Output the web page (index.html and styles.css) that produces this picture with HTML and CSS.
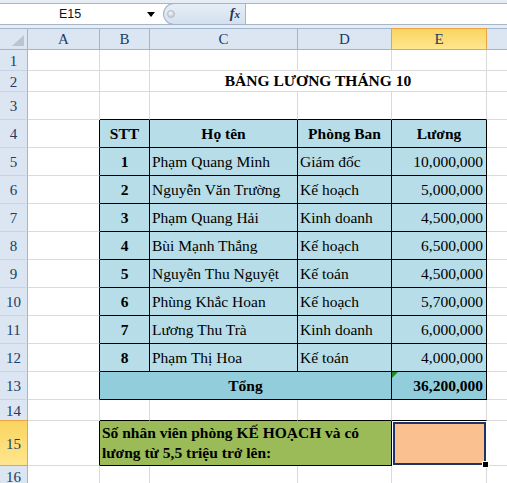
FILE: index.html
```html
<!DOCTYPE html>
<html lang="vi">
<head>
<meta charset="utf-8">
<title>Bảng lương tháng 10</title>
<link rel="stylesheet" href="styles.css">
</head>
<body>
<div class="app">
  <div class="fbar">
    <div class="frow">
      <div class="namebox">E15</div>
      <div class="dd"><span class="tri"></span></div>
      <div class="fxpill"><span class="knob"></span><span class="fx"><i>f</i><i class="fxx">x</i></span></div>
      <div class="finput"></div>
    </div>
  </div>
  <div class="sheet">
    <div class="ch corner"><span class="ctri"></span></div>
    <div class="ch">A</div><div class="ch">B</div><div class="ch">C</div><div class="ch">D</div><div class="ch hsel hcol">E</div><div class="ch"></div>

    <div class="rh">1</div><div class="c"></div><div class="c"></div><div class="c"></div><div class="c"></div><div class="c"></div><div class="c"></div>

    <div class="rh">2</div><div class="c"></div><div class="c"></div><div class="c span3 ctr b">BẢNG LƯƠNG THÁNG 10</div><div class="c"></div>

    <div class="rh">3</div><div class="c"></div><div class="c kb"></div><div class="c kb"></div><div class="c kb"></div><div class="c kb"></div><div class="c"></div>

    <div class="rh">4</div><div class="c kr"></div><div class="c bl ctr b">STT</div><div class="c bl ctr b">Họ tên</div><div class="c bl ctr b">Phòng Ban</div><div class="c bl ctr b">Lương</div><div class="c"></div>

    <div class="rh">5</div><div class="c kr"></div><div class="c bl ctr b">1</div><div class="c bl lt">Phạm Quang Minh</div><div class="c bl lt">Giám đốc</div><div class="c bl rt">10,000,000</div><div class="c"></div>

    <div class="rh">6</div><div class="c kr"></div><div class="c bl ctr b">2</div><div class="c bl lt">Nguyễn Văn Trường</div><div class="c bl lt">Kế hoạch</div><div class="c bl rt">5,000,000</div><div class="c"></div>

    <div class="rh">7</div><div class="c kr"></div><div class="c bl ctr b">3</div><div class="c bl lt">Phạm Quang Hải</div><div class="c bl lt">Kinh doanh</div><div class="c bl rt">4,500,000</div><div class="c"></div>

    <div class="rh">8</div><div class="c kr"></div><div class="c bl ctr b">4</div><div class="c bl lt">Bùi Mạnh Thắng</div><div class="c bl lt">Kế hoạch</div><div class="c bl rt">6,500,000</div><div class="c"></div>

    <div class="rh">9</div><div class="c kr"></div><div class="c bl ctr b">5</div><div class="c bl lt">Nguyễn Thu Nguyệt</div><div class="c bl lt">Kế toán</div><div class="c bl rt">4,500,000</div><div class="c"></div>

    <div class="rh">10</div><div class="c kr"></div><div class="c bl ctr b">6</div><div class="c bl lt">Phùng Khắc Hoan</div><div class="c bl lt">Kế hoạch</div><div class="c bl rt">5,700,000</div><div class="c"></div>

    <div class="rh">11</div><div class="c kr"></div><div class="c bl ctr b">7</div><div class="c bl lt">Lương Thu Trà</div><div class="c bl lt">Kinh doanh</div><div class="c bl rt">6,000,000</div><div class="c"></div>

    <div class="rh">12</div><div class="c kr"></div><div class="c bl ctr b">8</div><div class="c bl lt">Phạm Thị Hoa</div><div class="c bl lt">Kế toán</div><div class="c bl rt">4,000,000</div><div class="c"></div>

    <div class="rh">13</div><div class="c kr"></div><div class="c tot span3 ctr b">Tổng</div><div class="c tot rt b rel"><span class="errtri"></span>36,200,000</div><div class="c"></div>

    <div class="rh">14</div><div class="c"></div><div class="c kb"></div><div class="c kb"></div><div class="c kb"></div><div class="c kb"></div><div class="c"></div>

    <div class="rh hsel hrow">15</div><div class="c kr"></div><div class="c grn span3 lt b two">Số nhân viên phòng KẾ HOẠCH và có<br>lương từ 5,5 triệu trở lên:</div><div class="c org rel"><span class="selbox"></span><span class="handle"></span></div><div class="c"></div>

    <div class="rh">16</div><div class="c"></div><div class="c"></div><div class="c"></div><div class="c"></div><div class="c"></div><div class="c"></div>
  </div>
</div>
</body>
</html>
```
FILE: styles.css
```css
* { box-sizing: border-box; }
body {
  margin: 0;
  width: 507px;
  height: 483px;
  overflow: hidden;
  background: #fff;
}
.app { width: 507px; height: 483px; overflow: hidden; }

/* formula bar */
.fbar {
  height: 28px;
  padding-top: 3px;
  background: #e6edf5;
}
.frow {
  height: 22px;
  display: flex;
  background: #fff;
  border-top: 1px solid #a9b5c3;
  border-bottom: 1px solid #a9b5c3;
}
.namebox {
  width: 140px;
  display: flex;
  align-items: center;
  justify-content: center;
  font-family: "Liberation Sans", Arial, sans-serif;
  font-size: 12.5px;
  color: #111;
}
.dd {
  width: 23px;
  display: flex;
  align-items: center;
  padding-left: 7px;
  padding-top: 1px;
}
.tri {
  width: 0;
  height: 0;
  border-left: 4px solid transparent;
  border-right: 4px solid transparent;
  border-top: 5px solid #000;
}
.fxpill {
  width: 83px;
  margin-top: -1px;
  margin-bottom: -1px;
  display: flex;
  align-items: center;
  background: linear-gradient(#e6eef8, #d4e0ee);
  border: 1px solid #a3b4c8;
  border-right-color: #a9b5c3;
  border-radius: 11px 0 0 11px;
}
.knob {
  width: 8px;
  height: 8px;
  margin-left: 3px;
  border-radius: 50%;
  background: radial-gradient(circle at 40% 35%, #f4f5f7, #b9c0c9);
  border: 1px solid #b3bbc6;
}
.fx {
  margin-left: auto;
  margin-right: 5px;
  font-family: "Liberation Serif", "Times New Roman", serif;
  font-weight: bold;
  font-size: 14px;
  color: #24344f;
  line-height: 1;
}
.fxx { font-size: 11px; }
.finput { flex: 1; }

/* sheet */
.sheet {
  display: grid;
  grid-template-columns: 28px 72px 50px 148px 94px 95px 30px;
  grid-template-rows: 22px 21px 21px repeat(11, 28px) 21px 45px 21px;
  width: 517px;
  font-family: "Liberation Serif", "Times New Roman", serif;
  font-size: 15.5px;
  color: #000;
}
.ch, .rh {
  display: flex;
  align-items: center;
  justify-content: center;
  background: #dce6f2;
  color: #203c64;
  font-size: 15px;
}
.ch {
  border-top: 1px solid #9eb6ce;
  border-bottom: 1px solid #9eb6ce;
  border-right: 1px solid #9eb6ce;
}
.rh {
  border-right: 1px solid #9eb6ce;
  border-bottom: 1px solid #c6d4e4;
  padding-top: 2px;
}
.corner {
  justify-content: flex-end;
  align-items: flex-end;
  padding: 0 3px 3px 0;
}
.ctri {
  width: 0;
  height: 0;
  border-left: 12px solid transparent;
  border-bottom: 11px solid #b9c5d3;
}
.hsel {
  background: linear-gradient(#f9d45f, #ffe68e);
  border-color: #eea343;
}
.hcol { box-shadow: -1px 0 0 #eea343; }
.hrow { box-shadow: 0 -1px 0 #eea343; border-bottom-color: #eea343; }

.c {
  display: flex;
  align-items: center;
  white-space: nowrap;
  border-right: 1px solid #dadada;
  border-bottom: 1px solid #dadada;
}
.span3 { grid-column: span 3; }
.ctr { justify-content: center; }
.lt { justify-content: flex-start; padding-left: 2px; }
.rt { justify-content: flex-end; padding-right: 3px; }
.b { font-weight: bold; }
.kr { border-right-color: #000; }
.kb { border-bottom-color: #000; }
.bl, .tot, .grn, .org {
  border-right-color: #000;
  border-bottom-color: #000;
}
.bl { background: #b7dee8; }
.tot { background: #92cddc; }
.grn { background: #9bbb59; }
.org { background: #fac090; }
.two {
  line-height: 20px;
  white-space: normal;
  align-items: center;
}
.rel { position: relative; }
.errtri {
  position: absolute;
  left: 0;
  top: 0;
  width: 0;
  height: 0;
  border-top: 6px solid #1e8b24;
  border-right: 6px solid transparent;
}
.selbox {
  position: absolute;
  left: 0;
  top: 0;
  right: -1px;
  bottom: -1px;
  border: 1px solid #fff;
  box-shadow: inset 0 0 0 2px #1c3562;
}
.handle {
  position: absolute;
  right: -3px;
  bottom: -3px;
  width: 7px;
  height: 7px;
  background: #000;
  border: 1px solid #fff;
}
```
